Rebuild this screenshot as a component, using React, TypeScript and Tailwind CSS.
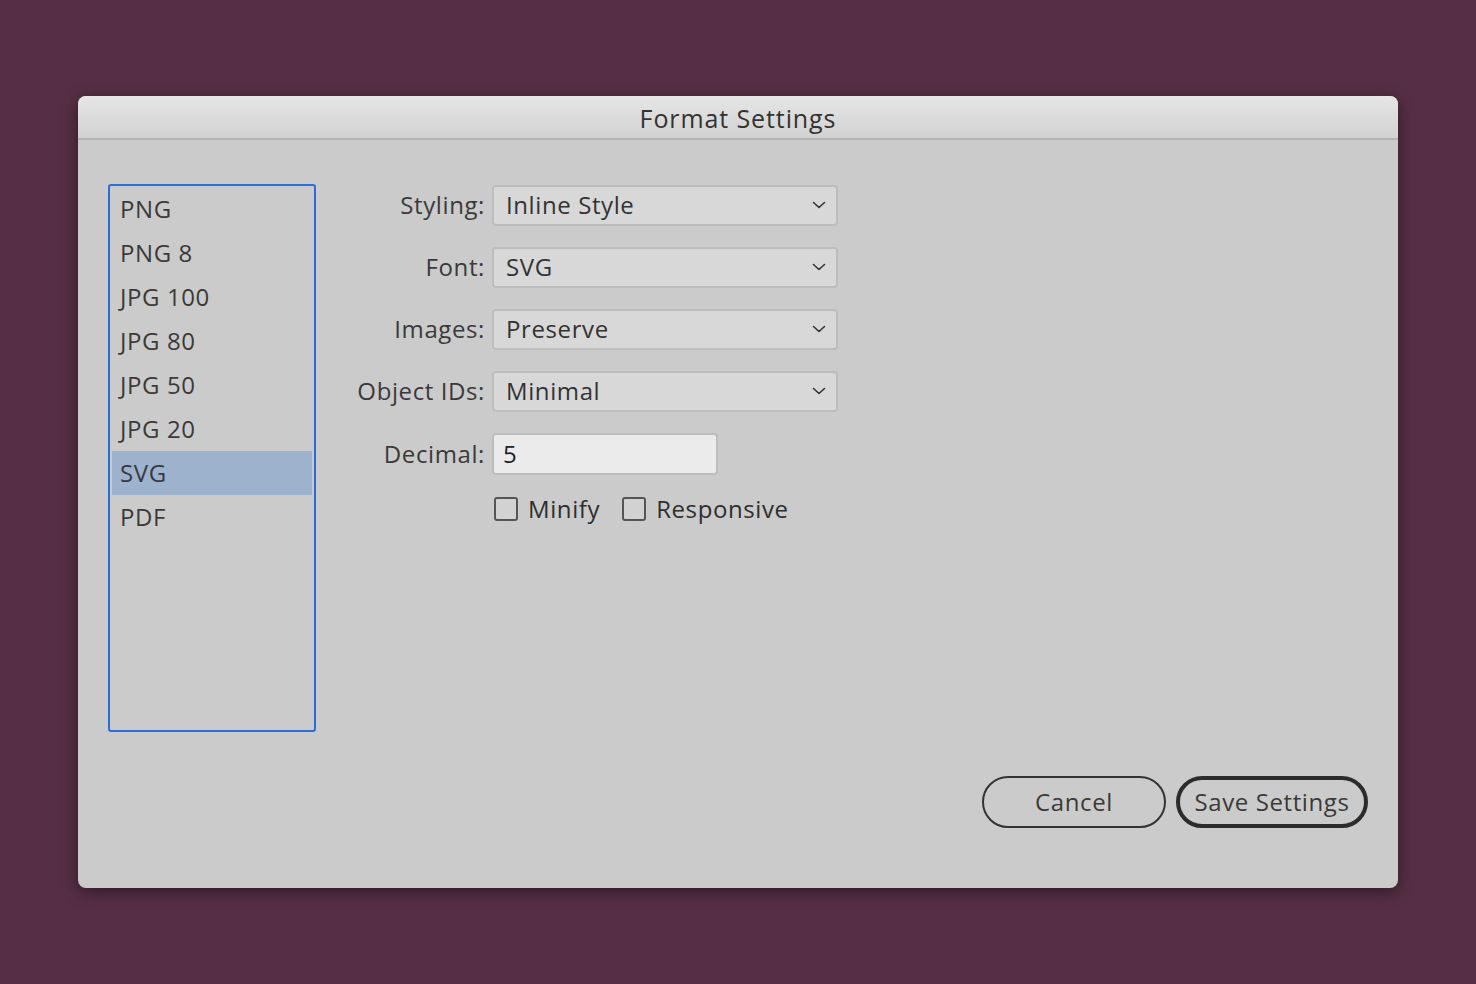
import React from "react";

const items = ["PNG", "PNG 8", "JPG 100", "JPG 80", "JPG 50", "JPG 20", "SVG", "PDF"];

function Chevron() {
  return (
    <svg width="14" height="8" viewBox="0 0 14 8" fill="none" className="shrink-0">
      <path d="M1.5 1.5 L7 6.5 L12.5 1.5" stroke="#333" strokeWidth="1.6" strokeLinecap="round" strokeLinejoin="round" />
    </svg>
  );
}

function SelectRow({ label, value }: { label: string; value: string }) {
  return (
    <div className="flex items-center h-[62px]">
      <div className="w-[144px] text-right pr-[7px] text-[#3a3a3a]">{label}</div>
      <div className="w-[346px] h-[41px] rounded-[4px] border-2 border-[#bdbdbd] bg-[#d8d8d8] flex items-center justify-between pl-[12px] pr-[10px] text-[#333]">
        <span>{value}</span>
        <Chevron />
      </div>
    </div>
  );
}

function Checkbox({ label }: { label: string }) {
  return (
    <div className="flex items-center gap-[10px]">
      <div className="w-[24px] h-[24px] rounded-[3px] border-2 border-[#555] bg-[#d2d2d2]" />
      <span className="text-[#2e2e2e]">{label}</span>
    </div>
  );
}

export default function App() {
  return (
    <div
      className="w-[1476px] h-[984px] bg-[#562f44] flex items-start justify-center pt-[96px] tracking-[0.6px]"
      style={{ fontFamily: '"Open Sans", "Noto Sans", sans-serif' }}
    >
      <div className="w-[1320px] h-[792px] bg-[#cbcbcb] rounded-[8px] shadow-[0_4px_16px_rgba(0,0,0,0.45)] flex flex-col overflow-hidden">
        <div className="h-[44px] shrink-0 bg-gradient-to-b from-[#e6e6e6] to-[#d2d2d2] border-b-2 border-[#b4b4b4] flex items-center justify-center pt-[3px] text-[25px] text-[#333] tracking-[0.9px]">
          Format Settings
        </div>
        <div className="flex flex-1 pl-[30px] pt-[44px] text-[24px]">
          <div className="w-[208px] h-[548px] border-2 border-[#2a6fd8] rounded-[3px] p-[2px] pt-[1px] flex flex-col">
            {items.map((it) => (
              <div
                key={it}
                className={`h-[44px] flex items-center pl-[8px] text-[#3a3a3a] ${it === "SVG" ? "bg-[#9db2cd]" : ""}`}
              >
                {it}
              </div>
            ))}
          </div>
          <div className="flex flex-col pl-[32px] -mt-[42px]">
            <div className="h-[32px]" />
            <SelectRow label="Styling:" value="Inline Style" />
            <SelectRow label="Font:" value="SVG" />
            <SelectRow label="Images:" value="Preserve" />
            <SelectRow label="Object IDs:" value="Minimal" />
            <div className="flex items-center h-[64px]">
              <div className="w-[144px] text-right pr-[7px] text-[#3a3a3a]">Decimal:</div>
              <div className="w-[226px] h-[42px] rounded-[4px] border-2 border-[#bdbdbd] bg-[#ebebeb] flex items-center pl-[9px] text-[#222]">
                5
              </div>
            </div>
            <div className="flex items-center gap-[22px] pl-[146px] h-[46px]">
              <Checkbox label="Minify" />
              <Checkbox label="Responsive" />
            </div>
          </div>
        </div>
        <div className="flex justify-end gap-[10px] pr-[30px] pb-[60px] text-[24px]">
          <button className="w-[184px] h-[52px] rounded-full border-2 border-[#333] text-[#3a3a3a] flex items-center justify-center">
            Cancel
          </button>
          <button className="w-[192px] h-[52px] rounded-full border-4 border-[#2c2c2c] text-[#3a3a3a] flex items-center justify-center">
            Save Settings
          </button>
        </div>
      </div>
    </div>
  );
}
